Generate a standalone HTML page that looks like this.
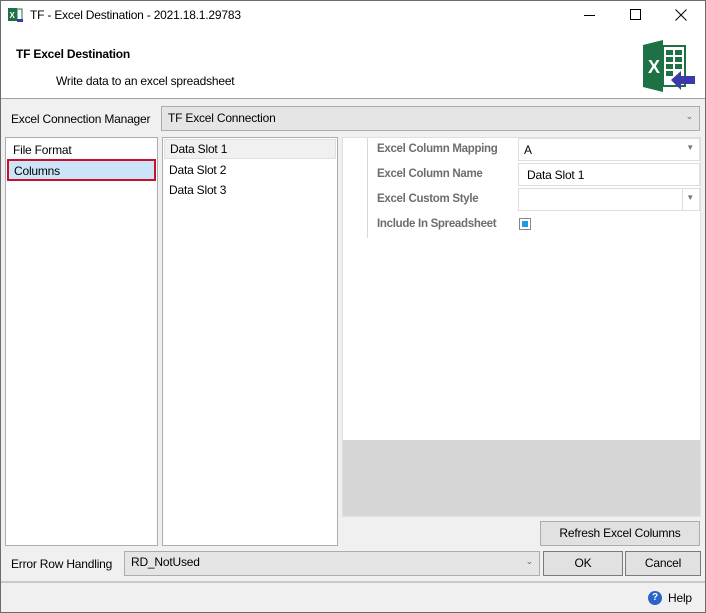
<!DOCTYPE html>
<html><head><style>
*{box-sizing:border-box;margin:0;padding:0}
body{width:706px;height:613px;overflow:hidden;font-family:"Liberation Sans",sans-serif;font-size:12px;letter-spacing:-0.2px;color:#000;background:#f0f0f0;position:relative}
.a{position:absolute}
.win{left:0;top:0;width:706px;height:613px;border:1px solid #6b6b6b}
.box{background:#fff;border:1px solid #abadb3}
.btn{background:#e1e1e1;border:1px solid #adadad;text-align:center;line-height:22px}
.lbl{color:#6d6d6d;font-weight:bold;font-size:11.5px;letter-spacing:-0.3px}
</style></head><body>
<div class="a win"></div>
<div class="a" style="left:1px;top:1px;width:704px;height:98px;background:#fff;border-bottom:1px solid #a0a0a0"></div>
<svg class="a" style="left:8px;top:7px" width="16" height="16"><rect x="0" y="1" width="9" height="13" fill="#1e7145"/><text x="1.5" y="11" font-size="8" fill="#fff" font-family="Liberation Sans" font-weight="bold">X</text><rect x="9" y="2" width="5" height="11" fill="#fff" stroke="#1e7145"/><path d="M9 12h6v3H9z" fill="#3b3ba8"/></svg>
<div class="a" style="left:30px;top:8px">TF - Excel Destination - 2021.18.1.29783</div>
<div class="a" style="left:584px;top:15px;width:11px;height:1px;background:#000"></div>
<div class="a" style="left:630px;top:9px;width:11px;height:11px;border:1px solid #000"></div>
<svg class="a" style="left:675px;top:9px" width="12" height="12"><path d="M0.5 0.5L11.5 11.5M11.5 0.5L0.5 11.5" stroke="#000" stroke-width="1"/></svg>
<div class="a" style="left:16px;top:47px;font-weight:bold">TF Excel Destination</div>
<div class="a" style="left:56px;top:74px">Write data to an excel spreadsheet</div>
<svg class="a" style="left:643px;top:40px" width="52" height="52"><path d="M0 5L20 0V52L0 47Z" fill="#1e7145"/><text x="5" y="33" font-size="18" font-weight="bold" fill="#fff" font-family="Liberation Sans">X</text><rect x="20" y="6" width="22" height="40" fill="#fff" stroke="#1e7145" stroke-width="2"/><g fill="#1e7145"><rect x="23" y="10" width="7" height="5"/><rect x="32" y="10" width="7" height="5"/><rect x="23" y="17" width="7" height="5"/><rect x="32" y="17" width="7" height="5"/><rect x="23" y="24" width="7" height="5"/><rect x="32" y="24" width="7" height="5"/><rect x="23" y="31" width="7" height="5"/></g><path d="M28 40L38 31V36H52V44H38V50Z" fill="#3b3ba8"/></svg>
<div class="a" style="left:11px;top:112px">Excel Connection Manager</div>
<div class="a" style="left:161px;top:106px;width:539px;height:25px;background:#e5e5e5;border:1px solid #acacac;padding:4px 6px">TF Excel Connection<span class="a" style="right:6px;top:4px;font-size:9px;color:#666">⌄</span></div>
<div class="a box" style="left:5px;top:137px;width:153px;height:409px"></div>
<div class="a" style="left:13px;top:143px">File Format</div>
<div class="a" style="left:7px;top:159px;width:149px;height:22px;background:#cce4f7;border:2px solid #c8102e;padding:3px 5px">Columns</div>
<div class="a box" style="left:162px;top:137px;width:176px;height:409px"></div>
<div class="a" style="left:164px;top:139px;width:172px;height:20px;background:#f0f0f0;border:1px solid #e0e0e0;padding:2px 5px">Data Slot 1</div>
<div class="a" style="left:169px;top:163px">Data Slot 2</div>
<div class="a" style="left:169px;top:183px">Data Slot 3</div>
<div class="a" style="left:342px;top:137px;width:359px;height:380px;background:#fff;border:1px solid #e0e0e0"></div>
<div class="a" style="left:367px;top:138px;width:1px;height:100px;background:#d8d8d8"></div>
<div class="a" style="left:343px;top:440px;width:357px;height:76px;background:#d6d6d6"></div>
<div class="a lbl" style="left:377px;top:143px">Excel Column Mapping</div>
<div class="a lbl" style="left:377px;top:168px">Excel Column Name</div>
<div class="a lbl" style="left:377px;top:193px">Excel Custom Style</div>
<div class="a lbl" style="left:377px;top:218px">Include In Spreadsheet</div>
<div class="a box" style="left:518px;top:138px;width:182px;height:23px;border-color:#ddd;padding:4px 5px">A<span class="a" style="right:5px;top:4px;font-size:8px;color:#777">▼</span></div>
<div class="a box" style="left:518px;top:163px;width:182px;height:23px;border-color:#ddd;padding:4px 8px">Data Slot 1</div>
<div class="a box" style="left:518px;top:188px;width:182px;height:23px;border-color:#ddd"><div class="a" style="right:16px;top:0;width:1px;height:21px;background:#ddd"></div><span class="a" style="right:5px;top:4px;font-size:8px;color:#777">▼</span></div>
<div class="a" style="left:519px;top:218px;width:12px;height:12px;border:1px solid #888;background:#fff"><div class="a" style="left:2px;top:2px;width:6px;height:6px;background:#1e9be0"></div></div>
<div class="a btn" style="left:540px;top:521px;width:160px;height:25px">Refresh Excel Columns</div>
<div class="a" style="left:11px;top:557px">Error Row Handling</div>
<div class="a" style="left:124px;top:551px;width:416px;height:25px;background:#e5e5e5;border:1px solid #acacac;padding:3px 6px">RD_NotUsed<span class="a" style="right:6px;top:4px;font-size:9px;color:#666">⌄</span></div>
<div class="a btn" style="left:543px;top:551px;width:80px;height:25px;border-color:#7a7a7a">OK</div>
<div class="a btn" style="left:625px;top:551px;width:76px;height:25px;border-color:#7a7a7a">Cancel</div>
<div class="a" style="left:1px;top:581px;width:704px;height:2px;background:#c8c8c8"></div>
<div class="a" style="left:648px;top:591px;width:14px;height:14px;border-radius:50%;background:#2b63c6;color:#fff;font-size:10px;font-weight:bold;text-align:center;line-height:14px">?</div>
<div class="a" style="left:668px;top:591px">Help</div>
</body></html>
